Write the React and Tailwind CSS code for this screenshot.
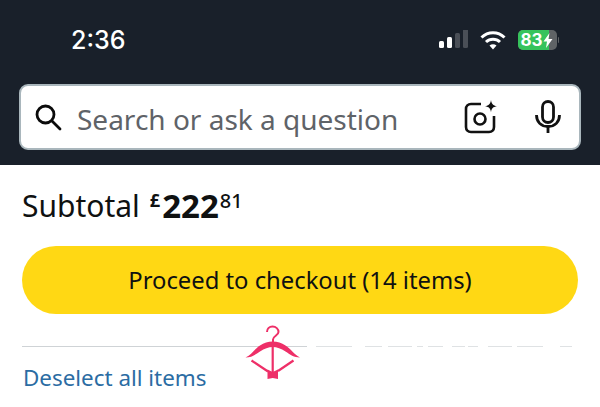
import React from "react";

const lineBits = [
  [9, 36], [13, 17], [6, 24], [5, 6], [5, 15], [9, 13], [3, 10], [10, 24], [5, 26], [17, 12],
];

function SignalIcon() {
  return (
    <svg width="30" height="20" viewBox="0 0 30 20">
      <rect x="1" y="11" width="5" height="7" rx="1.5" fill="#fff" />
      <rect x="9" y="7" width="5" height="11" rx="1.5" fill="#fff" />
      <rect x="17" y="3" width="5" height="15" rx="1.5" fill="#4a4f57" />
      <rect x="25" y="-1" width="5" height="19" rx="1.5" fill="#4a4f57" />
    </svg>
  );
}

function WifiIcon() {
  return (
    <svg width="26" height="20" viewBox="0 0 26 20" fill="none" stroke="#fff" strokeWidth="3">
      <path d="M1.5 7.5C8 1 18 1 24.5 7.5" />
      <path d="M6 12C10 8.2 16 8.2 20 12" />
      <path d="M13 19.5L9.5 15.6C11.5 13.9 14.5 13.9 16.5 15.6Z" fill="#fff" stroke="none" />
    </svg>
  );
}

function Battery() {
  return (
    <div className="flex items-center gap-[1px]">
      <div className="relative w-[39px] h-[20px] rounded-[5px] overflow-hidden bg-[#5f6366]">
        <div className="h-full w-[31px] bg-[#36c35c]" />
        <div className="absolute inset-0 flex items-center pl-[3px] text-white text-[17px] font-bold leading-none font-['Inter',sans-serif]">
          83
          <svg width="10" height="15" viewBox="0 0 10 15" fill="#fff">
            <path d="M6.5 0L0.5 8.5H4L3 15L9.5 6H5.5Z" />
          </svg>
        </div>
      </div>
      <div className="w-[1.5px] h-[6px] rounded-r bg-[#5f6366]" />
    </div>
  );
}

function Hanger() {
  return (
    <svg width="56" height="56" viewBox="0 0 56 56" fill="none" className="absolute left-[245px] top-[325px]">
      <path d="M22 7C22 3.5 24.5 1.5 27.5 1.5C31 1.5 33.5 4 33.5 7C33.5 10.5 28 11 28 14.5V18" stroke="#ee2f68" strokeWidth="2" />
      <path
        d="M0.5 32.5C7 29.5 10 23.5 15 20.5C19 18 23 16.5 27.7 16.5C32.5 16.5 36.5 18 40.5 20.5C45.5 23.5 49 29.5 55 32.5C49 32.5 45 29.5 40.5 26.5C36 23.5 32 22 27.7 22C23.5 22 19.5 23.5 15 26.5C10.5 29.5 6.5 32.5 0.5 32.5Z"
        fill="#ee2f68"
      />
      <path d="M27.7 18V47" stroke="#ee2f68" strokeWidth="2.2" />
      <path d="M6.5 35.5L23 46.5M48.5 35.5L33 46" stroke="#ee2f68" strokeWidth="2.2" />
      <path d="M22.5 44.5L27.7 47L33 44.5V54L27.7 53L22.5 54Z" fill="#ee2f68" />
    </svg>
  );
}

export default function App() {
  return (
    <div className="relative w-[600px] h-[407px] overflow-hidden bg-white font-['Noto_Sans',sans-serif]">
      {/* Top bar */}
      <div className="bg-[#19202a] h-[165px] px-[19px] pt-[25px] flex flex-col">
        <div className="flex items-center justify-between h-[30px] pl-[52px] pr-[22px]">
          <span className="text-white text-[25px] font-medium relative top-[1px] font-['Inter',sans-serif]">2:36</span>
          <div className="flex items-center gap-[12px]">
            <SignalIcon />
            <WifiIcon />
            <Battery />
          </div>
        </div>
        <div className="mt-[29px] h-[66px] rounded-[9px] bg-white border-2 border-[#a9b6bc] flex items-center pl-[13px] pr-[18px]">
          <svg width="28" height="28" viewBox="0 0 28 28" fill="none" stroke="#0b0b0b" strokeWidth="2.8">
            <circle cx="11.5" cy="11.5" r="8.5" />
            <path d="M18 18L26 26" strokeLinecap="round" />
          </svg>
          <span className="ml-[15px] pt-[3px] text-[28px] text-[#5f6368]">Search or ask a question</span>
          <div className="ml-auto flex items-center gap-[38px]">
            <svg width="34" height="34" viewBox="0 0 34 34" fill="none" stroke="#111" strokeWidth="2.6">
              <path d="M18 4H8C5 4 3 6 3 9V27C3 30 5 32 8 32H26C29 32 31 30 31 27V16" />
              <circle cx="17" cy="19" r="5.5" />
              <path d="M28 0C28.6 4 30 5.6 34 6.2C30 6.8 28.6 8.2 28 12.2C27.4 8.2 26 6.8 22 6.2C26 5.6 27.4 4 28 0Z" fill="#111" stroke="none" />
            </svg>
            <svg width="26" height="34" viewBox="0 0 26 34" fill="none" stroke="#111" strokeWidth="2.8">
              <rect x="7.5" y="1.5" width="11" height="21" rx="5.5" />
              <path d="M1.5 15C1.5 22 6 26.5 13 26.5C20 26.5 24.5 22 24.5 15" />
              <path d="M13 26.5V33" />
            </svg>
          </div>
        </div>
      </div>

      {/* Cart summary */}
      <div className="px-[22px]">
        <div className="flex items-start h-[81px] pt-[21px] text-[#0f1111]">
          <span className="text-[30px] leading-[40px]">Subtotal</span>
          <span className="ml-[10px] mt-[4px] text-[18px] font-bold leading-[20px]">£</span>
          <span className="ml-[2px] text-[33px] font-bold leading-[40px]">222</span>
          <span className="mt-[5px] ml-[1px] text-[20px] font-medium leading-[20px]">81</span>
        </div>
        <div className="h-[68px] pt-[2px] rounded-full bg-[#ffd814] flex items-center justify-center text-[23.8px] text-[#0f1111]">
          Proceed to checkout (14 items)
        </div>
        <div className="mt-[31px] flex items-center h-[2px]">
          <div className="w-[285px] h-[1px] bg-[#cfd3d6]" />
          {lineBits.map(([gap, width], i) => (
            <div key={i} className="h-[1px] bg-[#dfe2e4]" style={{ marginLeft: gap, width }} />
          ))}
        </div>
        <div className="mt-[16px] pl-[1px] text-[22.4px] leading-[30px] text-[#2b6ca3]">Deselect all items</div>
      </div>

      <Hanger />
    </div>
  );
}
